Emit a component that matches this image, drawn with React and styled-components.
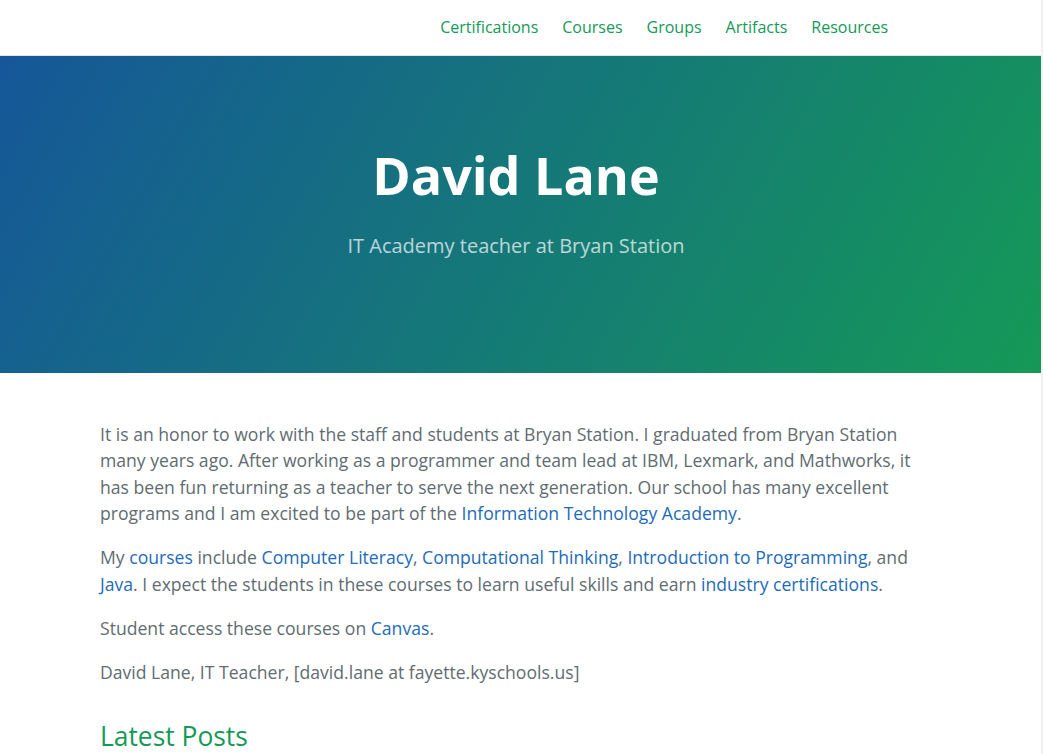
import React from "react";
import styled, { createGlobalStyle } from "styled-components";

const Global = createGlobalStyle`
  html { overflow: hidden; background: #f1f1f1; }
  body {
    margin: 0;
    margin-right: 2px;
    background: #fff;
    font-family: "Open Sans", "Helvetica Neue", Helvetica, Arial, sans-serif;
    color: #606c71;
    min-height: 754px;
  }
  * { box-sizing: border-box; }
`;

const Header = styled.header`
  height: 56px;
  border-bottom: 1px solid #e4e4e4;
  display: flex;
  align-items: center;
  justify-content: flex-end;
  padding-right: 153px;
`;

const Nav = styled.nav`
  display: flex;
  gap: 24px;
  margin-top: -2px;
`;

const NavLink = styled.a`
  color: #159957;
  font-size: 16px;
  text-decoration: none;
`;

const Hero = styled.section`
  background-image: linear-gradient(120deg, #155799, #159957);
  color: #fff;
  text-align: center;
  padding: 80px 9px 80px 0;
`;

const Title = styled.h1`
  font-size: 52px;
  font-weight: 700;
  line-height: 78px;
  margin: 0 0 1.6px;
`;

const Tagline = styled.h2`
  font-size: 20px;
  font-weight: 400;
  line-height: 30px;
  opacity: 0.7;
  margin: 17px 0 32px;
`;

const Main = styled.main`
  padding: 48px 109px 0 100px;
  font-size: 17.6px;
  line-height: 1.5;
`;

const P = styled.p`
  margin: 0 0 17.6px;
`;

const A = styled.a`
  color: #1e6bb8;
  text-decoration: none;
`;

const H2 = styled.h2`
  color: #159957;
  font-weight: 400;
  font-size: 26.4px;
  line-height: 1.5;
  margin: 32px 0 16px;
`;

export default function App() {
  return (
    <>
      <Global />
      <Header>
        <Nav>
          {["Certifications", "Courses", "Groups", "Artifacts", "Resources"].map((t) => (
            <NavLink key={t} href="#">{t}</NavLink>
          ))}
        </Nav>
      </Header>
      <Hero>
        <Title>David Lane</Title>
        <Tagline>IT Academy teacher at Bryan Station</Tagline>
      </Hero>
      <Main>
        <P>
          It is an honor to work with the staff and students at Bryan Station. I graduated from Bryan Station
          many years ago. After working as a programmer and team lead at IBM, Lexmark, and Mathworks, it has
          been fun returning as a teacher to serve the next generation. Our school has many excellent programs
          and I am excited to be part of the <A href="#">Information Technology Academy</A>.
        </P>
        <P>
          My <A href="#">courses</A> include <A href="#">Computer Literacy</A>,{" "}
          <A href="#">Computational Thinking</A>, <A href="#">Introduction to Programming</A>, and{" "}
          <A href="#">Java</A>. I expect the students in these courses to learn useful skills and earn{" "}
          <A href="#">industry certifications</A>.
        </P>
        <P>
          Student access these courses on <A href="#">Canvas</A>.
        </P>
        <P>David Lane, IT Teacher, [david.lane at fayette.kyschools.us]</P>
        <H2>Latest Posts</H2>
      </Main>
    </>
  );
}
